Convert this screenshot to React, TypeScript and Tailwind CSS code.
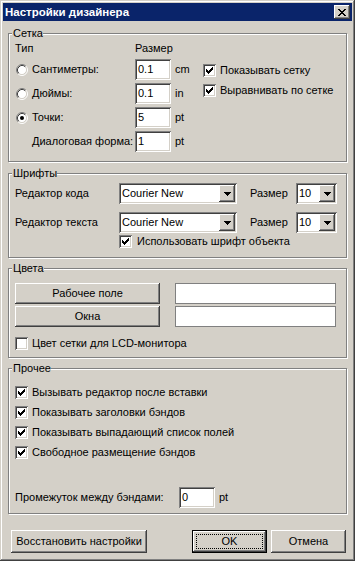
import React from "react";

/* classic 3D edges */
const RAISED =
  "shadow-[inset_-1px_-1px_#404040,inset_1px_1px_#fff,inset_-2px_-2px_#808080,inset_2px_2px_#d4d0c8]";
const SUNKEN =
  "shadow-[inset_1px_1px_#808080,inset_-1px_-1px_#fff,inset_2px_2px_#404040,inset_-2px_-2px_#d4d0c8]";

const CHECK_COLS = [
  [3, 5],
  [4, 6],
  [5, 7],
  [6, 6],
  [7, 5],
  [8, 4],
  [9, 3],
];

function Check({ checked }: { checked?: boolean }) {
  return (
    <span className={`block h-[13px] w-[13px] shrink-0 bg-white ${SUNKEN}`}>
      {checked && (
        <svg width="13" height="13" viewBox="0 0 13 13" shapeRendering="crispEdges" className="block">
          {CHECK_COLS.map(([x, y]) => (
            <rect key={x} x={x} y={y} width="1" height="3" fill="#000" />
          ))}
        </svg>
      )}
    </span>
  );
}

function Radio({ checked }: { checked?: boolean }) {
  return (
    <svg width="12" height="12" viewBox="0 0 12 12" className="block shrink-0">
      <circle cx="6" cy="6" r="4.5" fill="#fff" />
      <path d="M2.11 9.89A5.5 5.5 0 0 1 9.89 2.11" stroke="#808080" fill="none" />
      <path d="M9.89 2.11A5.5 5.5 0 0 1 2.11 9.89" stroke="#fff" fill="none" />
      <path d="M2.82 9.18A4.5 4.5 0 0 1 9.18 2.82" stroke="#404040" fill="none" />
      <path d="M9.18 2.82A4.5 4.5 0 0 1 2.82 9.18" stroke="#d4d0c8" fill="none" />
      {checked && <circle cx="6" cy="6" r="2" fill="#000" />}
    </svg>
  );
}

function Arrow() {
  return (
    <svg width="7" height="4" viewBox="0 0 7 4" shapeRendering="crispEdges" className="block">
      <rect x="0" y="0" width="7" height="1" fill="#000" />
      <rect x="1" y="1" width="5" height="1" fill="#000" />
      <rect x="2" y="2" width="3" height="1" fill="#000" />
      <rect x="3" y="3" width="1" height="1" fill="#000" />
    </svg>
  );
}

function CloseGlyph() {
  const px = [
    [0, 0], [1, 0], [6, 0], [7, 0],
    [1, 1], [2, 1], [5, 1], [6, 1],
    [2, 2], [3, 2], [4, 2], [5, 2],
    [3, 3], [4, 3],
    [2, 4], [3, 4], [4, 4], [5, 4],
    [1, 5], [2, 5], [5, 5], [6, 5],
    [0, 6], [1, 6], [6, 6], [7, 6],
  ];
  return (
    <svg width="8" height="7" viewBox="0 0 8 7" shapeRendering="crispEdges" className="block">
      {px.map(([x, y]) => (
        <rect key={`${x}-${y}`} x={x} y={y} width="1" height="1" fill="#000" />
      ))}
    </svg>
  );
}

function Edit({ value, className = "" }: { value?: string; className?: string }) {
  return (
    <div className={`flex h-[21px] shrink-0 items-center bg-white pl-[3px] ${SUNKEN} ${className}`}>{value}</div>
  );
}

function Combo({ value, className = "" }: { value: string; className?: string }) {
  return (
    <div className={`flex h-[21px] shrink-0 bg-white p-[2px] ${SUNKEN} ${className}`}>
      <span className="flex flex-1 items-center overflow-hidden pl-[1px]">{value}</span>
      <span className={`flex h-[17px] w-[16px] items-center justify-center bg-[#d4d0c8] ${RAISED}`}>
        <Arrow />
      </span>
    </div>
  );
}

function Btn({ children, className = "" }: { children: React.ReactNode; className?: string }) {
  return (
    <button className={`flex shrink-0 items-center justify-center bg-[#d4d0c8] ${RAISED} ${className}`}>
      {children}
    </button>
  );
}

function CheckRow({ label, checked, gap = "gap-[4px]" }: { label: string; checked?: boolean; gap?: string }) {
  return (
    <div className={`flex h-[13px] items-center ${gap}`}>
      <Check checked={checked} />
      <span className="whitespace-nowrap">{label}</span>
    </div>
  );
}

function Group({ title, className = "", children }: { title: string; className?: string; children: React.ReactNode }) {
  return (
    <fieldset
      className={`min-w-0 border border-[#808080] px-[6px] shadow-[inset_1px_1px_#fff,1px_1px_#fff] ${className}`}
    >
      <legend className="-ml-[3px] bg-[#d4d0c8] pl-[1px]">{title}</legend>
      {children}
    </fieldset>
  );
}

function SizeRow({
  radio,
  checked,
  label,
  value,
  unit,
}: {
  radio?: boolean;
  checked?: boolean;
  label: string;
  value: string;
  unit: string;
}) {
  return (
    <div className="flex h-[21px] items-center">
      <span className="w-[17px] pl-[1px]">{radio && <Radio checked={checked} />}</span>
      <span className="w-[103px] whitespace-nowrap">{label}</span>
      <Edit value={value} className="w-[36px]" />
      <span className="ml-[4px]">{unit}</span>
    </div>
  );
}

export default function App() {
  return (
    <div
      className={`flex h-[561px] w-[355px] flex-col bg-[#d4d0c8] p-[3px] font-['Liberation_Sans',Arial,sans-serif] text-[11px] leading-[13px] text-black shadow-[inset_-1px_-1px_#404040,inset_1px_1px_#d4d0c8,inset_-2px_-2px_#808080,inset_2px_2px_#fff]`}
    >
      {/* заголовок окна */}
      <div className="flex h-[18px] items-center bg-[#0a246a] pl-[2px] pr-[2px]">
        <span className="flex-1 text-[11.5px] font-bold text-white">Настройки дизайнера</span>
        <span className={`flex h-[14px] w-[16px] items-center justify-center bg-[#d4d0c8] ${RAISED}`}>
          <CloseGlyph />
        </span>
      </div>

      <div className="flex flex-col px-[5px] pt-[6px]">
        <Group title="Сетка" className="h-[135px]">
          <div className="flex pt-[2px]">
            <div className="flex w-[188px] flex-col">
              <div className="flex h-[13px]">
                <span className="w-[120px]">Тип</span>
                <span>Размер</span>
              </div>
              <div className="mt-[4px] flex flex-col gap-[3px]">
                <SizeRow radio label="Сантиметры:" value="0.1" unit="cm" />
                <SizeRow radio label="Дюймы:" value="0.1" unit="in" />
                <SizeRow radio checked label="Точки:" value="5" unit="pt" />
                <SizeRow label="Диалоговая форма:" value="1" unit="pt" />
              </div>
            </div>
            <div className="mt-[22px] flex flex-col gap-[7px]">
              <CheckRow checked label="Показывать сетку" />
              <CheckRow checked label="Выравнивать по сетке" />
            </div>
          </div>
        </Group>

        <Group title="Шрифты" className="mt-[5px] h-[91px]">
          <div className="flex flex-col pt-[3px]">
            <div className="flex h-[21px] items-center">
              <span className="w-[104px] whitespace-nowrap">Редактор кода</span>
              <Combo value="Courier New" className="w-[118px]" />
              <span className="ml-[13px] w-[46px]">Размер</span>
              <Combo value="10" className="w-[41px]" />
            </div>
            <div className="mt-[8px] flex h-[21px] items-center">
              <span className="w-[104px] whitespace-nowrap">Редактор текста</span>
              <Combo value="Courier New" className="w-[118px]" />
              <span className="ml-[13px] w-[46px]">Размер</span>
              <Combo value="10" className="w-[41px]" />
            </div>
            <div className="mt-[2px] pl-[104px]">
              <CheckRow checked gap="gap-[5px]" label="Использовать шрифт объекта" />
            </div>
          </div>
        </Group>

        <Group title="Цвета" className="mt-[4px] h-[96px]">
          <div className="flex flex-col pt-[8px]">
            <div className="flex">
              <Btn className="h-[21px] w-[145px]">Рабочее поле</Btn>
              <div className="ml-[15px] h-[21px] w-[161px] border border-[#808080] bg-white" />
            </div>
            <div className="mt-[2px] flex">
              <Btn className="h-[21px] w-[145px]">Окна</Btn>
              <div className="ml-[15px] h-[21px] w-[161px] border border-[#808080] bg-white" />
            </div>
            <div className="mt-[10px]">
              <CheckRow label="Цвет сетки для LCD-монитора" />
            </div>
          </div>
        </Group>

        <Group title="Прочее" className="mt-[4px] h-[152px]">
          <div className="flex flex-col pt-[11px]">
            <div className="flex flex-col gap-[7px]">
              <CheckRow checked label="Вызывать редактор после вставки" />
              <CheckRow checked label="Показывать заголовки бэндов" />
              <CheckRow checked label="Показывать выпадающий список полей" />
              <CheckRow checked label="Свободное размещение бэндов" />
            </div>
            <div className="mt-[28px] flex h-[21px] items-center">
              <span className="w-[164px] whitespace-nowrap">Промежуток между бэндами:</span>
              <Edit value="0" className="w-[36px]" />
              <span className="ml-[4px]">pt</span>
            </div>
          </div>
        </Group>

        <div className="mt-[16px] flex h-[23px] pr-[1px]">
          <Btn className="ml-[3px] h-[23px] w-[136px]">Восстановить настройки</Btn>
          <button className="ml-auto flex h-[23px] w-[75px] border border-black bg-[#d4d0c8] p-[3px] shadow-[inset_-1px_-1px_#404040,inset_1px_1px_#fff,inset_-2px_-2px_#808080]">
            <span className="flex flex-1 items-center justify-center self-stretch border border-dotted border-black">
              OK
            </span>
          </button>
          <Btn className="ml-[4px] h-[23px] w-[75px]">Отмена</Btn>
        </div>
      </div>
    </div>
  );
}
